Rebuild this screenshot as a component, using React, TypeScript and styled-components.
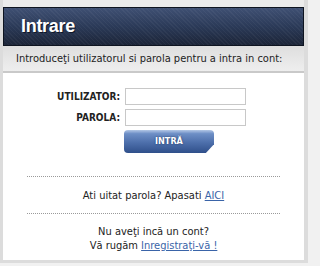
import React from "react";
import styled, { createGlobalStyle } from "styled-components";

const Global = createGlobalStyle`
  html, body { margin: 0; padding: 0; background: #f1f1f1; }
  body { font-family: "DejaVu Sans Condensed", "DejaVu Sans", sans-serif; }
`;

const Page = styled.div`
  width: 320px;
  height: 266px;
  background: #f1f1f1;
  overflow: hidden;
`;

const Panel = styled.div`
  width: 308px;
  box-sizing: border-box;
  background: #ebebeb;
  border: 3px solid #dcdcdc;
  border-top: 0;
  border-right-width: 4px;
  padding-top: 7px;
  display: flex;
  flex-direction: column;
`;

const Header = styled.div`
  height: 39px;
  box-sizing: border-box;
  border: 1px solid #0e1420;
  background:
    repeating-linear-gradient(45deg, rgba(255,255,255,0.04) 0 1px, transparent 1px 3px),
    linear-gradient(180deg, #3f5073 0%, #2b3a58 50%, #1c2538 100%);
  display: flex;
  align-items: center;
  padding-left: 17px;
`;

const Title = styled.h1`
  margin: 0;
  font-family: "Liberation Sans", Arial, sans-serif;
  font-weight: bold;
  font-size: 18px;
  color: #ffffff;
  text-shadow: 1px 1px 0 #10182a;
  letter-spacing: -0.3px;
`;

const Band = styled.div`
  height: 27px;
  box-sizing: border-box;
  background: linear-gradient(180deg, #dedede 0%, #e8e8e8 60%, #eeeeee 100%);
  border-bottom: 2px solid #c9c9c9;
  display: flex;
  align-items: center;
  padding-left: 13px;
  font-size: 11px;
  color: #222;
`;

const Body = styled.div`
  background: #ffffff;
  display: flex;
  flex-direction: column;
  padding: 15px 0 7px;
`;

const Form = styled.div`
  display: grid;
  grid-template-columns: 117px 121px;
  column-gap: 5px;
  row-gap: 4px;
  align-items: center;
  margin-bottom: 23px;
`;

const Label = styled.label`
  text-align: right;
  font-weight: bold;
  font-size: 10px;
  color: #222;
`;

const Input = styled.input`
  width: 121px;
  height: 17px;
  box-sizing: border-box;
  border: 1px solid #c8c8c8;
  margin: 0;
  padding: 0 3px;
  background: #fff;
`;

const Button = styled.button`
  grid-column: 2;
  margin-left: -1px;
  width: 90px;
  height: 23px;
  border: 0;
  border-radius: 4px;
  clip-path: polygon(0 0, 100% 0, 100% 62%, 91% 100%, 0 100%);
  background: linear-gradient(180deg, #b3c7e6 0%, #6e8fc6 16%, #4d6fab 55%, #2f4f8a 100%);
  color: #fff;
  font-family: "DejaVu Sans Condensed", "DejaVu Sans", sans-serif;
  font-weight: bold;
  font-size: 9px;
  text-shadow: 0 0 2px #1d355f;
  padding: 0 0 1px;
`;

const Divider = styled.hr`
  margin: 0 24px;
  border: 0;
  border-top: 1px dotted #9a9a9a;
  height: 0;
`;

const Note = styled.p<{ $pad: string }>`
  margin: 0;
  text-align: center;
  font-size: 11px;
  line-height: 14px;
  color: #222;
  padding: ${(p) => p.$pad};
`;

const Link = styled.a`
  color: #3a64a8;
  text-decoration: underline;
`;

export default function App() {
  return (
    <Page>
      <Global />
      <Panel>
        <Header>
          <Title>Intrare</Title>
        </Header>
        <Band>Introduceţi utilizatorul si parola pentru a intra in cont:</Band>
        <Body>
          <Form>
            <Label>UTILIZATOR:</Label>
            <Input type="text" />
            <Label>PAROLA:</Label>
            <Input type="password" />
            <Button>INTRĂ</Button>
          </Form>
          <Divider />
          <Note $pad="12px 0 10px">
            Ati uitat parola? Apasati <Link href="#">AICI</Link>
          </Note>
          <Divider />
          <Note $pad="11px 0 0">
            Nu aveţi incă un cont?
            <br />
            Vă rugăm <Link href="#">Inregistraţi-vă !</Link>
          </Note>
        </Body>
      </Panel>
    </Page>
  );
}
